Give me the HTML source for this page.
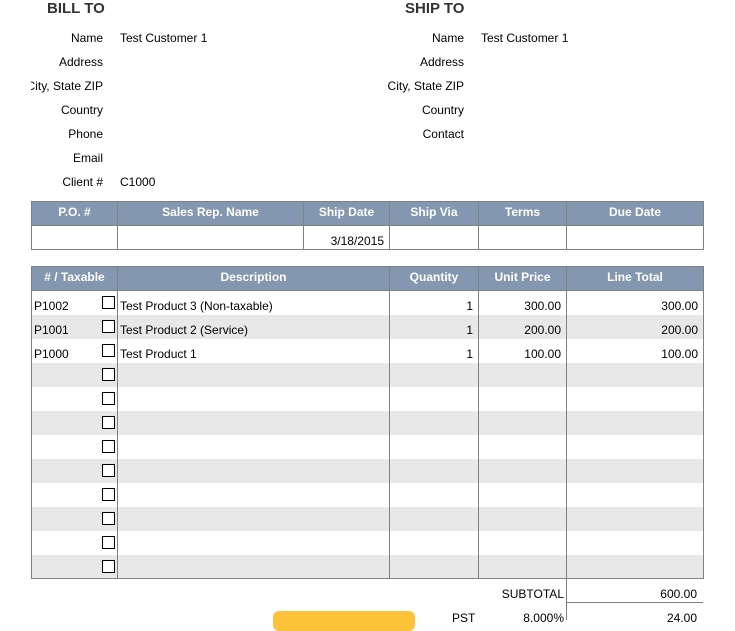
<!DOCTYPE html>
<html><head><meta charset="utf-8"><style>
*{margin:0;padding:0;box-sizing:border-box}
body{width:735px;height:620px;background:#fff;font-family:"Liberation Sans",Arial,sans-serif;font-size:12px;color:#000;position:relative;overflow:hidden}
.a{position:absolute;white-space:nowrap}
.h{font-weight:bold;font-size:15px;color:#333}
.lb{text-align:right}
table{position:absolute;border-collapse:collapse;table-layout:fixed}
td,th{border:1px solid #808080;padding:0 5px;height:24px;font-size:12px}
th{background:#8497b0;color:#fff;font-weight:bold;text-align:center;padding-bottom:3px}
.g td{background:#e8e8e8}
.r{text-align:right}
.cb{display:inline-block;width:13px;height:13px;border:1px solid #000;background:#fff;position:absolute;left:70px;top:5px}
td.c1{position:relative}
.items td{border-top:none;border-bottom:none;padding-top:6px}
</style></head><body>
<div class="a h" style="left:47px;top:0">BILL TO</div>
<div class="a h" style="left:405px;top:0">SHIP TO</div>
<div class="a" style="left:31px;top:26px;width:72px;overflow:hidden;height:170px">
<div style="position:absolute;right:0;top:0;text-align:right;line-height:24px">Name<br>Address<br>City, State ZIP<br>Country<br>Phone<br>Email<br>Client #</div></div>
<div class="a" style="left:120px;top:26px;line-height:24px">Test Customer 1<br><br><br><br><br><br>C1000</div>
<div class="a lb" style="right:271px;top:26px;line-height:24px">Name<br>Address<br>City, State ZIP<br>Country<br>Contact</div>
<div class="a" style="left:481px;top:26px;line-height:24px">Test Customer 1</div>

<table style="left:31px;top:201px;width:672px">
<colgroup><col style="width:86px"><col style="width:186px"><col style="width:86px"><col style="width:89px"><col style="width:88px"><col style="width:137px"></colgroup>
<tr><th>P.O. #</th><th>Sales Rep. Name</th><th>Ship Date</th><th>Ship Via</th><th>Terms</th><th>Due Date</th></tr>
<tr><td></td><td></td><td class="r" style="padding-top:6px">3/18/2015</td><td></td><td></td><td></td></tr>
</table>

<table class="items" style="left:31px;top:266px;width:672px">
<colgroup><col style="width:86px"><col style="width:272px"><col style="width:89px"><col style="width:88px"><col style="width:137px"></colgroup>
<tr><th style="border-bottom:1px solid #808080">#&nbsp;/ Taxable</th><th>Description</th><th>Quantity</th><th>Unit Price</th><th>Line Total</th></tr>
<tr><td class="c1" style="padding-left:2px">P1002<span class="cb"></span></td><td style="padding-left:2px">Test Product 3 (Non-taxable)</td><td class="r">1</td><td class="r">300.00</td><td class="r">300.00</td></tr>
<tr class="g"><td class="c1" style="padding-left:2px">P1001<span class="cb"></span></td><td style="padding-left:2px">Test Product 2 (Service)</td><td class="r">1</td><td class="r">200.00</td><td class="r">200.00</td></tr>
<tr><td class="c1" style="padding-left:2px">P1000<span class="cb"></span></td><td style="padding-left:2px">Test Product 1</td><td class="r">1</td><td class="r">100.00</td><td class="r">100.00</td></tr>
<tr class="g"><td class="c1"><span class="cb"></span></td><td></td><td></td><td></td><td></td></tr>
<tr><td class="c1"><span class="cb"></span></td><td></td><td></td><td></td><td></td></tr>
<tr class="g"><td class="c1"><span class="cb"></span></td><td></td><td></td><td></td><td></td></tr>
<tr><td class="c1"><span class="cb"></span></td><td></td><td></td><td></td><td></td></tr>
<tr class="g"><td class="c1"><span class="cb"></span></td><td></td><td></td><td></td><td></td></tr>
<tr><td class="c1"><span class="cb"></span></td><td></td><td></td><td></td><td></td></tr>
<tr class="g"><td class="c1"><span class="cb"></span></td><td></td><td></td><td></td><td></td></tr>
<tr><td class="c1"><span class="cb"></span></td><td></td><td></td><td></td><td></td></tr>
<tr class="g"><td class="c1"><span class="cb"></span></td><td></td><td></td><td></td><td></td></tr>
</table>
<div class="a" style="left:31px;top:578px;width:672px;height:1px;background:#808080"></div>
<div class="a" style="left:566px;top:578px;width:1px;height:42px;background:#808080"></div>
<div class="a" style="left:566px;top:602px;width:137px;height:1px;background:#808080"></div>
<div class="a" style="right:171px;top:587px">SUBTOTAL</div>
<div class="a" style="right:38px;top:587px">600.00</div>
<div class="a" style="left:452px;top:611px">PST</div>
<div class="a" style="right:171px;top:611px">8.000%</div>
<div class="a" style="right:38px;top:611px">24.00</div>
<div class="a" style="left:273px;top:611px;width:142px;height:20px;background:#fdc33a;border-radius:6px"></div>
</body></html>
